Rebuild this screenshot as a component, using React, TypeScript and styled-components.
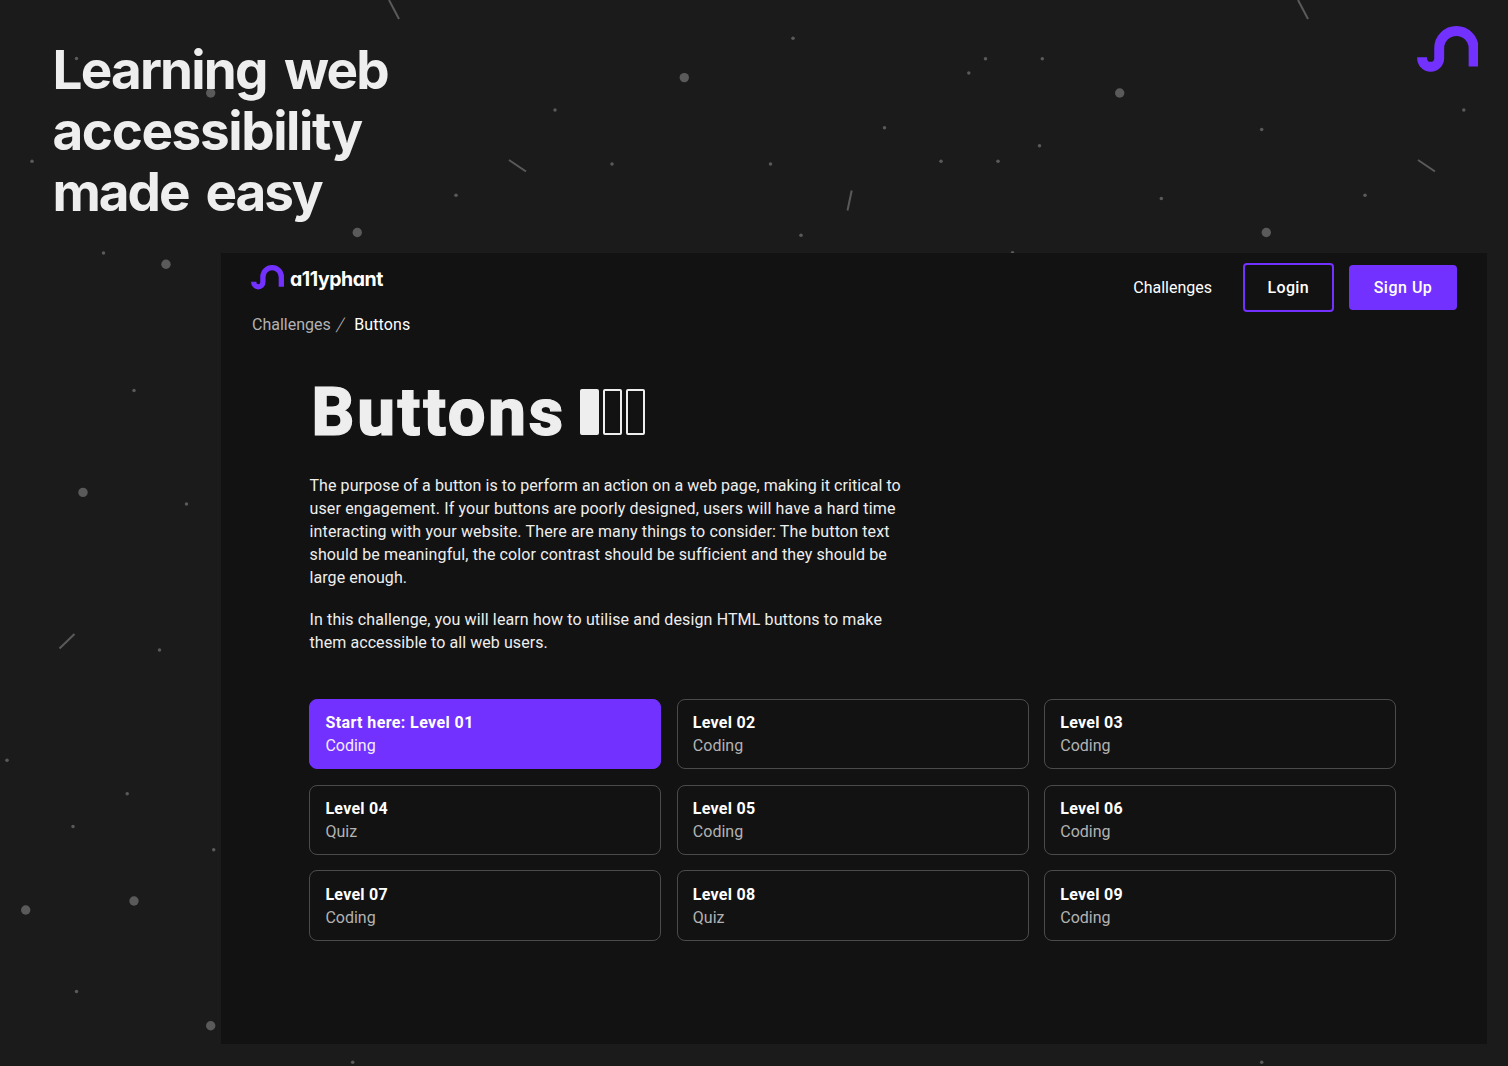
import React from "react";
import styled, { createGlobalStyle } from "styled-components";

const color = {
  page: "#1b1b1b",
  panel: "#121212",
  accent: "#7331ff",
  text: "#eeeeee",
  muted: "#b2b2b2",
  line: "#4b4b4b",
  star: "#5a5a5a",
};

const GlobalStyle = createGlobalStyle`
  *, *::before, *::after { box-sizing: border-box; }
  body {
    margin: 0;
    background: ${color.page};
    color: ${color.text};
    font-family: Roboto, "Open Sans", sans-serif;
    font-size: 16px;
    -webkit-font-smoothing: antialiased;
  }
  h1, h2, p { margin: 0; padding: 0; font-weight: inherit; }
  a { color: inherit; text-decoration: none; }
`;

const Page = styled.div`
  position: relative;
  width: 1508px;
  height: 1066px;
  overflow: hidden;
  display: flex;
  flex-direction: column;
  isolation: isolate;
`;

const Sky = styled.svg`
  position: absolute;
  inset: 0;
  z-index: -1;
`;

const Hero = styled.header`
  display: flex;
  justify-content: space-between;
  align-items: flex-start;
  height: 253px;
  padding: 26px 29.6px 0 52.5px;
`;

const Slogan = styled.h1`
  padding-top: 14px;
  font-family: Inter, sans-serif;
  font-size: 53px;
  font-weight: 660;
  line-height: 61px;
  word-spacing: 6.5px;
`;

const Line = styled.span<{ $spacing: number }>`
  display: block;
  white-space: nowrap;
  letter-spacing: ${(p) => p.$spacing}px;
`;

const Panel = styled.main`
  width: 1266px;
  height: 791px;
  margin-left: 221px;
  background: ${color.panel};
`;

const TopBar = styled.div`
  display: flex;
  justify-content: space-between;
  align-items: flex-start;
  height: 61px;
  padding: 10px 30px 0 30px;
`;

const Brand = styled.a`
  display: flex;
  gap: 6px;
  padding-top: 2px;
`;

const BrandName = styled.span`
  font-family: Inter, sans-serif;
  font-feature-settings: "cv11";
  font-size: 19.5px;
  font-weight: 660;
  line-height: 24px;
  padding-top: 2px;
  letter-spacing: -0.45px;
  color: #fff;
`;

const Nav = styled.nav`
  display: flex;
  align-items: center;
  color: #fff;
  line-height: 23px;
`;

const NavLink = styled.a`
  margin-right: 31px;
  font-weight: 450;
`;

const NavButton = styled.a<{ $primary?: boolean }>`
  display: flex;
  align-items: center;
  justify-content: center;
  width: ${(p) => (p.$primary ? 108 : 90.5)}px;
  height: ${(p) => (p.$primary ? 45.5 : 49)}px;
  margin-left: ${(p) => (p.$primary ? 15.5 : 0)}px;
  border: ${(p) => (p.$primary ? "none" : `2px solid ${color.accent}`)};
  border-radius: 4px;
  background: ${(p) => (p.$primary ? color.accent : "transparent")};
  font-weight: 550;
  letter-spacing: ${(p) => (p.$primary ? 0.5 : 0.3)}px;
`;

const Crumbs = styled.div`
  display: flex;
  height: 23px;
  padding-left: 31px;
  margin-top: -1px;
  line-height: 23px;
  color: ${color.muted};
`;

const Slash = styled.span`
  width: 23.5px;
  padding-left: 6px;
  font-size: 19px;
  font-weight: 300;
  transform: skewX(-12deg);
`;

const Current = styled.span`
  color: #fff;
  font-weight: 450;
  letter-spacing: 0.1px;
`;

const Content = styled.section`
  padding: 38px 0 0 88.5px;
`;

const TitleRow = styled.div`
  display: flex;
  align-items: center;
  height: 76px;
`;

const Title = styled.h2`
  width: 270.5px;
  padding-left: 2px;
  font-size: 67px;
  font-weight: 800;
  line-height: 76px;
  letter-spacing: 2.7px;
  -webkit-text-stroke: 1.2px ${color.text};
`;

const Difficulty = styled.div`
  display: flex;
  gap: 4px;
  padding-bottom: 1px;
`;

const Bar = styled.span<{ $filled?: boolean }>`
  width: 19px;
  height: 46px;
  border: 2px solid ${color.text};
  border-radius: 2px;
  background: ${(p) => (p.$filled ? color.text : "transparent")};
`;

const Copy = styled.p<{ $top: number }>`
  margin-top: ${(p) => p.$top}px;
  line-height: 22.9px;
`;

const Levels = styled.div`
  display: grid;
  grid-template-columns: repeat(3, 352px);
  grid-auto-rows: 70.5px;
  gap: 15.2px 15.45px;
  margin-top: 44.4px;
  margin-left: -0.1px;
`;

const Level = styled.a<{ $active?: boolean }>`
  padding: 12.5px 15px 0;
  border: 1px solid ${(p) => (p.$active ? color.accent : color.line)};
  border-radius: 8px;
  background: ${(p) => (p.$active ? color.accent : "transparent")};
  line-height: 22.8px;
  color: ${(p) => (p.$active ? "#f3edff" : color.muted)};
`;

const LevelName = styled.div<{ $active?: boolean }>`
  color: #fff;
  font-weight: 750;
  letter-spacing: ${(p) => (p.$active ? 0.4 : 0.27)}px;
`;

const Mark = ({ width }: { width: number }) => (
  <svg width={width} height={(width * 45.8) / 61.6} viewBox="0 0 61.6 45.8" fill="none" aria-hidden="true">
    <path
      d="M5.1 31.2v1a8.55 8.55 0 0 0 17.1 0V22.2a17.2 17.2 0 0 1 34.4 0V40.4"
      stroke={color.accent}
      strokeWidth="9.9"
    />
  </svg>
);

const small = [
  [76.5, 58.5], [32, 161.3], [103.5, 253], [555, 110], [612, 164], [456, 195.3], [793, 38.2],
  [770.5, 164], [884.5, 127.8], [941, 161.3], [801, 235.3], [985.5, 58.7], [968.8, 73], [1042.3, 58.7],
  [1039.5, 145.8], [998, 161.3], [1161.3, 198.6], [1012.5, 252.7], [1261.7, 129.4], [1463.8, 110],
  [1365, 195.3], [134, 390.4], [186.5, 504], [159.5, 650], [7, 760.2], [127.2, 793.7], [73, 826.6],
  [213.7, 849.7], [76.5, 991.5], [352.7, 1062.3], [1261.7, 1062.3],
];
const large = [
  [210.7, 93], [357.3, 232.5], [166, 264.3], [684.3, 77.6], [1119.7, 93], [1266.3, 232.5],
  [83, 492.4], [25.7, 910], [134, 901], [210.7, 1025.7],
];
const dashes = [
  [389, 0, 399, 19], [1298, 0, 1308, 19], [509, 160, 526, 171.5], [1418, 160, 1435, 171.5],
  [851.7, 190.5, 847.5, 210.5], [74.5, 634, 59.5, 648.5],
];

const Stars = () => (
  <Sky width="1508" height="1066" viewBox="0 0 1508 1066" aria-hidden="true">
    {small.map(([x, y]) => <circle key={`${x}-${y}`} cx={x} cy={y} r="1.75" fill={color.star} />)}
    {large.map(([x, y]) => <circle key={`${x}-${y}`} cx={x} cy={y} r="4.7" fill={color.star} />)}
    {dashes.map(([x1, y1, x2, y2]) => (
      <line key={`${x1}-${y1}`} x1={x1} y1={y1} x2={x2} y2={y2} stroke={color.star} strokeWidth="2" />
    ))}
  </Sky>
);

const slogan: [string, number][] = [
  ["Learning web", -1.8],
  ["accessibility", -1.4],
  ["made easy", -2.05],
];

const purpose: [string, number][] = [
  ["The purpose of a button is to perform an action on a web page, making it critical to", 0.073],
  ["user engagement. If your buttons are poorly designed, users will have a hard time", 0.145],
  ["interacting with your website. There are many things to consider: The button text", 0.145],
  ["should be meaningful, the color contrast should be sufficient and they should be", 0.12],
  ["large enough.", 0.08],
];

const goal: [string, number][] = [
  ["In this challenge, you will learn how to utilise and design HTML buttons to make", 0.123],
  ["them accessible to all web users.", 0.08],
];

const kinds = ["Coding", "Coding", "Coding", "Quiz", "Coding", "Coding", "Coding", "Quiz", "Coding"];

const Lines = ({ items }: { items: [string, number][] }) => (
  <>
    {items.map(([text, spacing]) => <Line key={text} $spacing={spacing}>{text}</Line>)}
  </>
);

export default function App() {
  return (
    <>
      <GlobalStyle />
      <Page>
        <Stars />
        <Hero>
          <Slogan><Lines items={slogan} /></Slogan>
          <Mark width={61.6} />
        </Hero>
        <Panel>
          <TopBar>
            <Brand href="#">
              <Mark width={33} />
              <BrandName>a11yphant</BrandName>
            </Brand>
            <Nav>
              <NavLink href="#">Challenges</NavLink>
              <NavButton href="#">Login</NavButton>
              <NavButton href="#" $primary>Sign Up</NavButton>
            </Nav>
          </TopBar>
          <Crumbs>
            <span>Challenges</span>
            <Slash>/</Slash>
            <Current>Buttons</Current>
          </Crumbs>
          <Content>
            <TitleRow>
              <Title>Buttons</Title>
              <Difficulty>
                <Bar $filled />
                <Bar />
                <Bar />
              </Difficulty>
            </TitleRow>
            <Copy $top={25.2}><Lines items={purpose} /></Copy>
            <Copy $top={19}><Lines items={goal} /></Copy>
            <Levels>
              {kinds.map((kind, i) => (
                <Level key={i} href="#" $active={i === 0}>
                  <LevelName $active={i === 0}>{`${i === 0 ? "Start here: " : ""}Level 0${i + 1}`}</LevelName>
                  <div>{kind}</div>
                </Level>
              ))}
            </Levels>
          </Content>
        </Panel>
      </Page>
    </>
  );
}
